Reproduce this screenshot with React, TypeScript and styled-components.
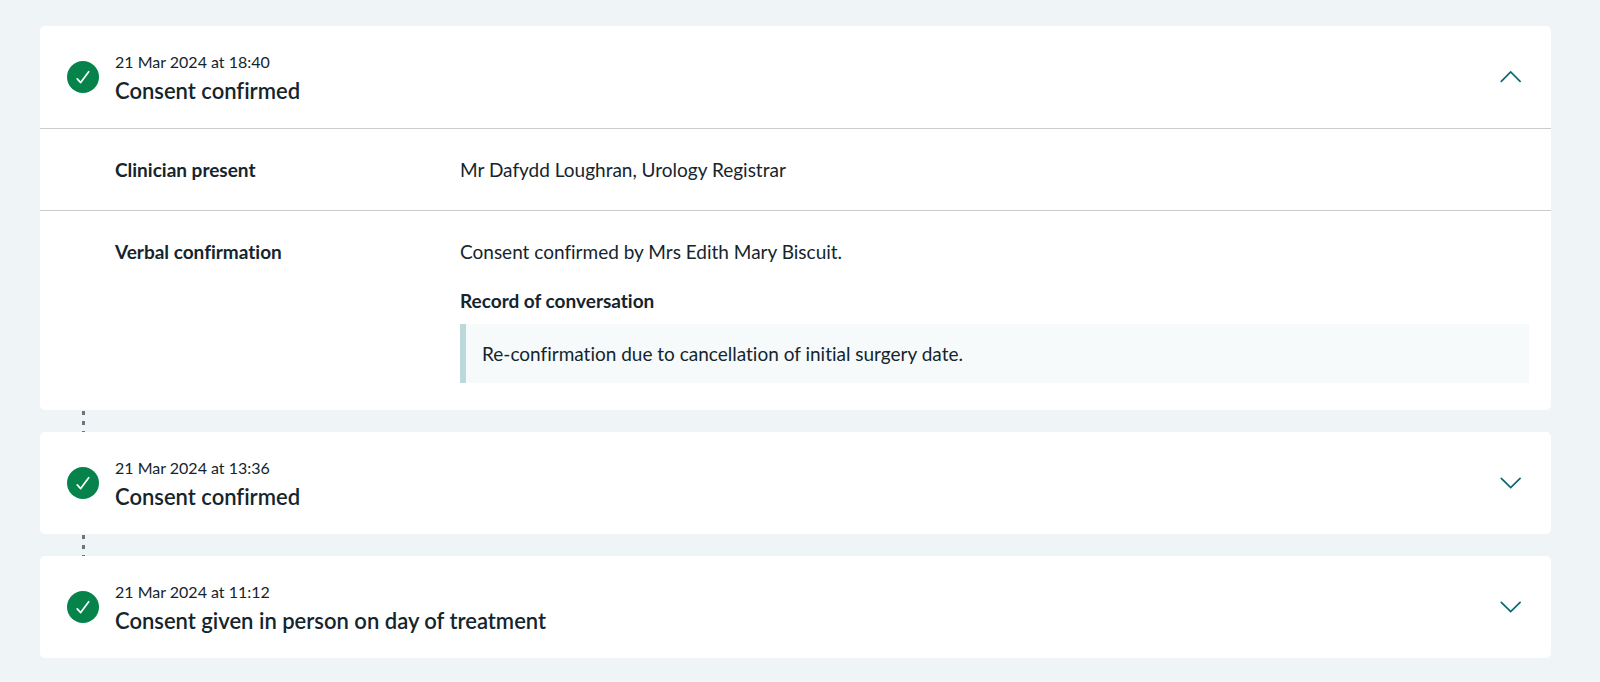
import React, { useState } from "react";
import styled, { createGlobalStyle } from "styled-components";

const GlobalStyle = createGlobalStyle`
  *, *::before, *::after { box-sizing: border-box; }
  body {
    margin: 0;
    background: #eff5f7;
    color: #14252d;
    font-family: Lato, "Open Sans", sans-serif;
    font-size: 19px;
    line-height: 27px;
    font-variant-ligatures: none;
  }
`;

const Timeline = styled.ol`
  list-style: none;
  margin: 0;
  padding: 26px 49px 24px 40px;
`;

const Entry = styled.li`
  & + &::before {
    content: "";
    display: block;
    width: 3px;
    height: 22px;
    margin-left: 42px;
    background: repeating-linear-gradient(transparent 0 1px, #6b757b 1px 5px, transparent 5px 10px);
  }
`;

const Card = styled.article`
  background: #fff;
  border-radius: 5px;
`;

const Heading = styled.h2`
  margin: 0;
  font: inherit;
`;

const Toggle = styled.button`
  display: flex;
  align-items: center;
  gap: 16px;
  width: 100%;
  padding: 23px 28px 23px 27px;
  border: 0;
  border-radius: 5px;
  background: none;
  color: inherit;
  font: inherit;
  font-variant-ligatures: none;
  text-align: left;
  cursor: pointer;
`;

const HeadingText = styled.span`
  display: flex;
  flex: 1;
  flex-direction: column;
  gap: 3px;
`;

const DateText = styled.span`
  font-size: 16px;
  line-height: 25px;
`;

const Title = styled.span`
  font-size: 22px;
  font-weight: 600;
  line-height: 28px;
`;

const Icon = styled.svg`
  flex: none;
  display: block;
`;

const Details = styled.dl`
  margin: 0;
`;

const DetailRow = styled.div`
  display: grid;
  grid-template-columns: 345px 1fr;
  padding: 27px 22px 27px 75px;
  border-top: 1px solid #c8cccd;
`;

const Term = styled.dt`
  font-weight: 700;
`;

const Description = styled.dd`
  margin: 0;
`;

const Paragraph = styled.p`
  margin: 0;
`;

const Subheading = styled.h3`
  margin: 22px 0 10px;
  font-size: inherit;
  font-weight: 700;
`;

const Quote = styled.blockquote`
  margin: 0;
  padding: 16px;
  border-left: 6px solid #bcd8db;
  background: #f6fafb;
`;

function CheckIcon() {
  return (
    <Icon width="32" height="32" viewBox="0 0 32 32" aria-hidden="true">
      <circle cx="16" cy="16" r="16" fill="#05834a" />
      <path
        d="M10.2 17.8 13.7 21.6 21.7 10.7"
        fill="none"
        stroke="#fff"
        strokeWidth="1.7"
        strokeLinecap="round"
        strokeLinejoin="round"
      />
    </Icon>
  );
}

function Chevron({ up }: { up: boolean }) {
  return (
    <Icon width="24" height="24" viewBox="0 0 24 24" aria-hidden="true">
      <path
        d={up ? "M2.3 16.3 11.7 7 21.1 16.3" : "M2.3 7.3 11.7 16.6 21.1 7.3"}
        fill="none"
        stroke="#0b6674"
        strokeWidth="1.7"
        strokeLinecap="round"
      />
    </Icon>
  );
}

type EventProps = {
  date: string;
  title: string;
  initiallyOpen?: boolean;
  children?: React.ReactNode;
};

function TimelineEvent({ date, title, initiallyOpen = false, children }: EventProps) {
  const [open, setOpen] = useState(initiallyOpen);
  return (
    <Entry>
      <Card>
        <Heading>
          <Toggle type="button" aria-expanded={open} onClick={() => setOpen(!open)}>
            <CheckIcon />
            <HeadingText>
              <DateText>{date}</DateText>
              <Title>{title}</Title>
            </HeadingText>
            <Chevron up={open} />
          </Toggle>
        </Heading>
        {open && children}
      </Card>
    </Entry>
  );
}

export default function App() {
  return (
    <main>
      <GlobalStyle />
      <Timeline>
        <TimelineEvent date="21 Mar 2024 at 18:40" title="Consent confirmed" initiallyOpen>
          <Details>
            <DetailRow>
              <Term>Clinician present</Term>
              <Description>Mr Dafydd Loughran, Urology Registrar</Description>
            </DetailRow>
            <DetailRow>
              <Term>Verbal confirmation</Term>
              <Description>
                <Paragraph>Consent confirmed by Mrs Edith Mary Biscuit.</Paragraph>
                <Subheading>Record of conversation</Subheading>
                <Quote>Re-confirmation due to cancellation of initial surgery date.</Quote>
              </Description>
            </DetailRow>
          </Details>
        </TimelineEvent>
        <TimelineEvent date="21 Mar 2024 at 13:36" title="Consent confirmed" />
        <TimelineEvent date="21 Mar 2024 at 11:12" title="Consent given in person on day of treatment" />
      </Timeline>
    </main>
  );
}
